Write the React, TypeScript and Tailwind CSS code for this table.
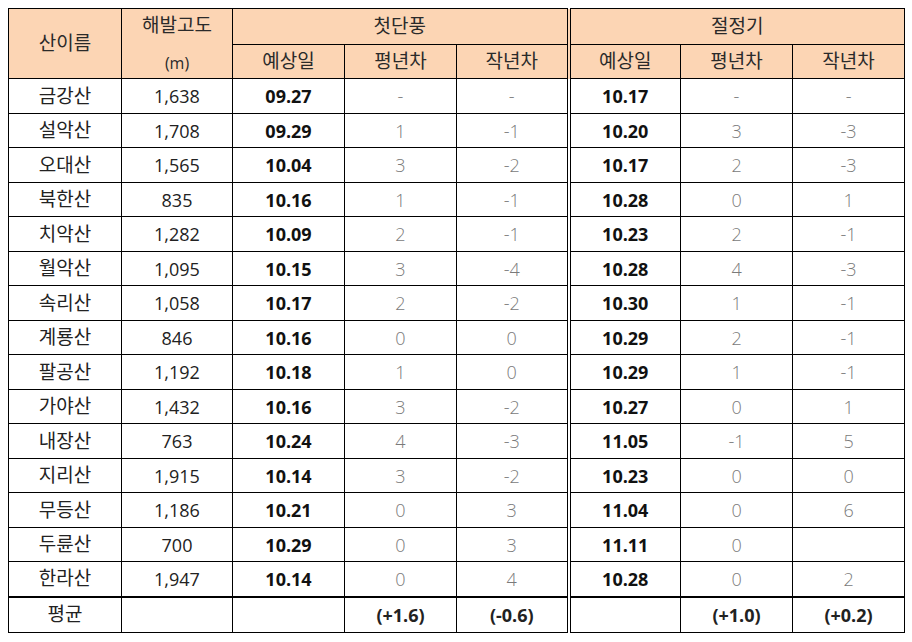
import React from "react";

type Row = [string, string, string, string, string, string, string, string];

const rows: Row[] = [
  ["금강산", "1,638", "09.27", "-", "-", "10.17", "-", "-"],
  ["설악산", "1,708", "09.29", "1", "-1", "10.20", "3", "-3"],
  ["오대산", "1,565", "10.04", "3", "-2", "10.17", "2", "-3"],
  ["북한산", "835", "10.16", "1", "-1", "10.28", "0", "1"],
  ["치악산", "1,282", "10.09", "2", "-1", "10.23", "2", "-1"],
  ["월악산", "1,095", "10.15", "3", "-4", "10.28", "4", "-3"],
  ["속리산", "1,058", "10.17", "2", "-2", "10.30", "1", "-1"],
  ["계룡산", "846", "10.16", "0", "0", "10.29", "2", "-1"],
  ["팔공산", "1,192", "10.18", "1", "0", "10.29", "1", "-1"],
  ["가야산", "1,432", "10.16", "3", "-2", "10.27", "0", "1"],
  ["내장산", "763", "10.24", "4", "-3", "11.05", "-1", "5"],
  ["지리산", "1,915", "10.14", "3", "-2", "10.23", "0", "0"],
  ["무등산", "1,186", "10.21", "0", "3", "11.04", "0", "6"],
  ["두륜산", "700", "10.29", "0", "3", "11.11", "0", ""],
  ["한라산", "1,947", "10.14", "0", "4", "10.28", "0", "2"],
];

const cell = "border border-black text-center p-0";
const hdr = "border border-black text-center p-0 text-[#2a2a2a] font-normal text-[19px]";
const dbl = "border-r-4 border-double";
const gray = "font-light text-[#7a7a7a]";
const bold = "font-bold text-[#111]";

export default function App() {
  return (
    <div
      className="bg-white w-[912px] h-[642px] pt-[8px] pl-[8px]"
      style={{ fontFamily: '"Open Sans", "Noto Sans CJK KR", sans-serif' }}
    >
      <table className="border-collapse table-fixed w-[896px] text-[18px] leading-none">
        <colgroup>
          <col className="w-[113px]" />
          <col className="w-[111px]" />
          <col className="w-[112px]" />
          <col className="w-[112px]" />
          <col className="w-[112px]" />
          <col className="w-[112px]" />
          <col className="w-[112px]" />
          <col className="w-[112px]" />
        </colgroup>
        <thead>
          <tr className="h-[35px] bg-[#fcd5b4]">
            <th rowSpan={2} className={hdr}>
              산이름
            </th>
            <th rowSpan={2} className={hdr}>
              <div className="flex flex-col items-center justify-between h-[69px] pt-[7px] pb-[7px]">
                <span>해발고도</span>
                <span className="text-[16px]">(m)</span>
              </div>
            </th>
            <th colSpan={3} className={`${hdr} ${dbl}`}>
              첫단풍
            </th>
            <th colSpan={3} className={hdr}>
              절정기
            </th>
          </tr>
          <tr className="h-[34px] bg-[#fcd5b4]">
            <th className={hdr}>예상일</th>
            <th className={hdr}>평년차</th>
            <th className={`${hdr} ${dbl}`}>작년차</th>
            <th className={hdr}>예상일</th>
            <th className={hdr}>평년차</th>
            <th className={hdr}>작년차</th>
          </tr>
        </thead>
        <tbody>
          {rows.map((r, i) => (
            <tr key={r[0]} className={i % 2 === 0 ? "h-[35px]" : "h-[34px]"}>
              <td className={`${cell} text-[#222] text-[19px]`}>{r[0]}</td>
              <td className={`${cell} text-[#222]`}>{r[1]}</td>
              <td className={`${cell} ${bold}`}>{r[2]}</td>
              <td className={`${cell} ${gray}`}>{r[3]}</td>
              <td className={`${cell} ${dbl} ${gray}`}>{r[4]}</td>
              <td className={`${cell} ${bold}`}>{r[5]}</td>
              <td className={`${cell} ${gray}`}>{r[6]}</td>
              <td className={`${cell} ${gray}`}>{r[7]}</td>
            </tr>
          ))}
          <tr className="h-[36px]">
            <td className={`${cell} border-t-2 text-[#222] text-[19px]`}>평균</td>
            <td className={`${cell} border-t-2`}></td>
            <td className={`${cell} border-t-2`}></td>
            <td className={`${cell} border-t-2 font-bold text-[#222]`}>(+1.6)</td>
            <td className={`${cell} ${dbl} border-t-2 font-bold text-[#222]`}>(-0.6)</td>
            <td className={`${cell} border-t-2`}></td>
            <td className={`${cell} border-t-2 font-bold text-[#222]`}>(+1.0)</td>
            <td className={`${cell} border-t-2 font-bold text-[#222]`}>(+0.2)</td>
          </tr>
        </tbody>
      </table>
    </div>
  );
}
